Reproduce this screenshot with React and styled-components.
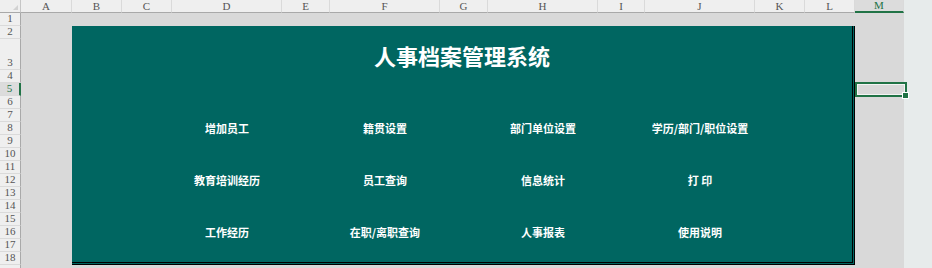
import React from "react";
import styled, { createGlobalStyle } from "styled-components";

const GlobalStyle = createGlobalStyle`
  html, body { margin: 0; padding: 0; background: #e7ebeb; }
  body { width: 932px; height: 268px; overflow: hidden; }
`;

const COLS = [
  { name: "A", w: 51 },
  { name: "B", w: 50 },
  { name: "C", w: 50 },
  { name: "D", w: 110 },
  { name: "E", w: 48 },
  { name: "F", w: 110 },
  { name: "G", w: 48 },
  { name: "H", w: 110 },
  { name: "I", w: 47 },
  { name: "J", w: 110 },
  { name: "K", w: 50 },
  { name: "L", w: 50 },
  { name: "M", w: 49 },
];

const ROWS = Array.from({ length: 19 }, (_, i) => ({
  n: i + 1,
  h: i + 1 === 3 ? 31 : 13,
}));

const Sheet = styled.div`
  display: grid;
  width: max-content;
  grid-template-columns: 21px ${COLS.map((c) => c.w + "px").join(" ")};
  grid-template-rows: 13px ${ROWS.map((r) => r.h + "px").join(" ")};
  background: #d9d9d9;
  font-family: "Liberation Serif", "DejaVu Serif", serif;
`;

const Corner = styled.div`
  grid-column: 1;
  grid-row: 1;
  background: #efefef;
  border-right: 1px solid #c6c6c6;
  border-bottom: 1px solid #a9a9a9;
  box-sizing: border-box;
  position: relative;
  &::after {
    content: "";
    position: absolute;
    right: 2px;
    bottom: 2px;
    border-style: solid;
    border-width: 0 0 5px 5px;
    border-color: transparent transparent #d2d2d2 transparent;
  }
`;

const ColHeader = styled.div`
  grid-row: 1;
  background: ${(p) => (p.$active ? "#dcdcdc" : "#efefef")};
  color: ${(p) => (p.$active ? "#217346" : "#555")};
  border-right: 1px solid #dadada;
  border-bottom: ${(p) => (p.$active ? "2px solid #217346" : "1px solid #a9a9a9")};
  box-sizing: border-box;
  font-size: 11px;
  line-height: 1;
  display: flex;
  align-items: center;
  justify-content: center;
`;

const RowHeader = styled.div`
  grid-column: 1;
  background: ${(p) => (p.$active ? "#dcdcdc" : "#efefef")};
  color: ${(p) => (p.$active ? "#217346" : "#555")};
  border-right: ${(p) => (p.$active ? "2px solid #217346" : "1px solid #a9a9a9")};
  border-bottom: 1px solid #dadada;
  box-sizing: border-box;
  font-size: 11px;
  line-height: 1;
  display: flex;
  align-items: flex-end;
  justify-content: center;
  padding-bottom: 1px;
  overflow: hidden;
`;

const Panel = styled.div`
  grid-column: 3 / 14;
  grid-row: 3 / 20;
  background: #006661;
  border-right: 3px double #000;
  border-bottom: 3px double #000;
  display: grid;
  grid-template-columns: 50px 50px 110px 48px 110px 48px 110px 47px 110px 50px minmax(0, 1fr);
  grid-template-rows: 13px 31px repeat(14, 13px) minmax(0, 1fr);
  font-family: "Noto Sans CJK SC", "Noto Sans", sans-serif;
  color: #fff;
`;

const Title = styled.div`
  grid-column: 1 / -1;
  grid-row: 2;
  display: flex;
  align-items: center;
  justify-content: center;
  font-size: 22px;
  font-weight: 700;
  line-height: 1;
`;

const Label = styled.div`
  grid-column: ${(p) => p.$col};
  grid-row: ${(p) => p.$row};
  display: flex;
  align-items: center;
  justify-content: center;
  white-space: nowrap;
  font-size: 11px;
  font-weight: 700;
  line-height: 1;
`;

const Selected = styled.div`
  grid-column: 14;
  grid-row: 6;
  margin: -1px -3px -1px 0;
  border: 2px solid #217346;
  box-shadow: inset 0 0 0 1px #f4f4f4;
  position: relative;
  z-index: 2;
`;

const FillHandle = styled.div`
  position: absolute;
  right: -4px;
  bottom: -4px;
  width: 5px;
  height: 5px;
  background: #217346;
  border: 1px solid #fff;
`;

const BUTTONS = [
  ["增加员工", "籍贯设置", "部门单位设置", "学历/部门/职位设置"],
  ["教育培训经历", "员工查询", "信息统计", "打 印"],
  ["工作经历", "在职/离职查询", "人事报表", "使用说明"],
];
const BTN_COLS = [3, 5, 7, 9];
const BTN_ROWS = [7, 11, 15];

export default function App() {
  return (
    <>
      <GlobalStyle />
      <Sheet>
        <Corner />
        {COLS.map((c, i) => (
          <ColHeader key={c.name} style={{ gridColumn: i + 2 }} $active={c.name === "M"}>
            {c.name}
          </ColHeader>
        ))}
        {ROWS.map((r, i) => (
          <RowHeader key={r.n} style={{ gridRow: i + 2 }} $active={r.n === 5}>
            {r.n <= 18 ? r.n : ""}
          </RowHeader>
        ))}
        <Panel>
          <Title>人事档案管理系统</Title>
          {BUTTONS.map((row, ri) =>
            row.map((text, ci) => (
              <Label key={text} $col={BTN_COLS[ci]} $row={BTN_ROWS[ri]}>
                {text}
              </Label>
            ))
          )}
        </Panel>
        <Selected>
          <FillHandle />
        </Selected>
      </Sheet>
    </>
  );
}
